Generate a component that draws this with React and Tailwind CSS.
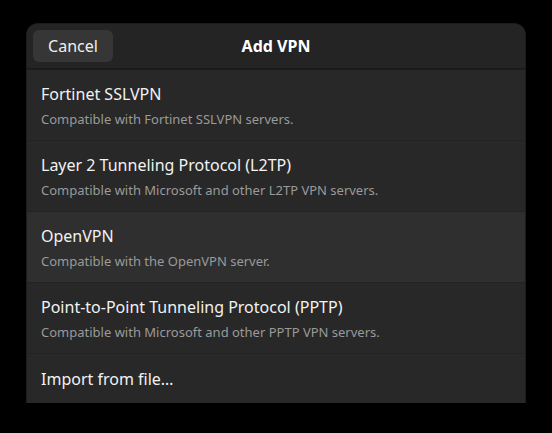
const ROWS = [
  { title: "Fortinet SSLVPN", sub: "Compatible with Fortinet SSLVPN servers." },
  { title: "Layer 2 Tunneling Protocol (L2TP)", sub: "Compatible with Microsoft and other L2TP VPN servers." },
  { title: "OpenVPN", sub: "Compatible with the OpenVPN server.", hover: true },
  { title: "Point-to-Point Tunneling Protocol (PPTP)", sub: "Compatible with Microsoft and other PPTP VPN servers." },
];

export default function App() {
  return (
    <div
      className="w-[552px] h-[433px] bg-black pt-[23px] pl-[26px] overflow-hidden"
      style={{ fontFamily: '"Noto Sans", "Open Sans", sans-serif' }}
    >
      <div className="w-[500px] h-[380px] bg-[#282828] rounded-t-[12px] border border-b-0 border-[#1c1c1c] flex flex-col overflow-hidden">
        {/* header */}
        <div className="h-[46px] shrink-0 bg-[#242424] border-b-2 border-[#1b1b1b] relative flex items-center px-[6px]">
          <button className="h-[32px] w-[80px] rounded-[6px] bg-[#363636] text-[#eeeeee] text-[16px]">
            Cancel
          </button>
          <div className="absolute inset-0 flex items-center justify-center pointer-events-none">
            <span className="text-white font-bold text-[16px]">Add VPN</span>
          </div>
        </div>

        {/* rows */}
        {ROWS.map((r) => (
          <div
            key={r.title}
            className={`h-[71px] shrink-0 border-b border-[#222222] flex flex-col justify-center pl-[14px] ${r.hover ? "bg-[#2f2f2f]" : ""}`}
          >
            <div className="text-[#f2f2f2] text-[16px] leading-[20px]">{r.title}</div>
            <div className="text-[#9a9a9a] text-[13px] leading-[16px] mt-[7px]">{r.sub}</div>
          </div>
        ))}
        <div className="flex-1 flex items-center pl-[14px]">
          <span className="text-[#f2f2f2] text-[16px]">Import from file…</span>
        </div>
      </div>
    </div>
  );
}
